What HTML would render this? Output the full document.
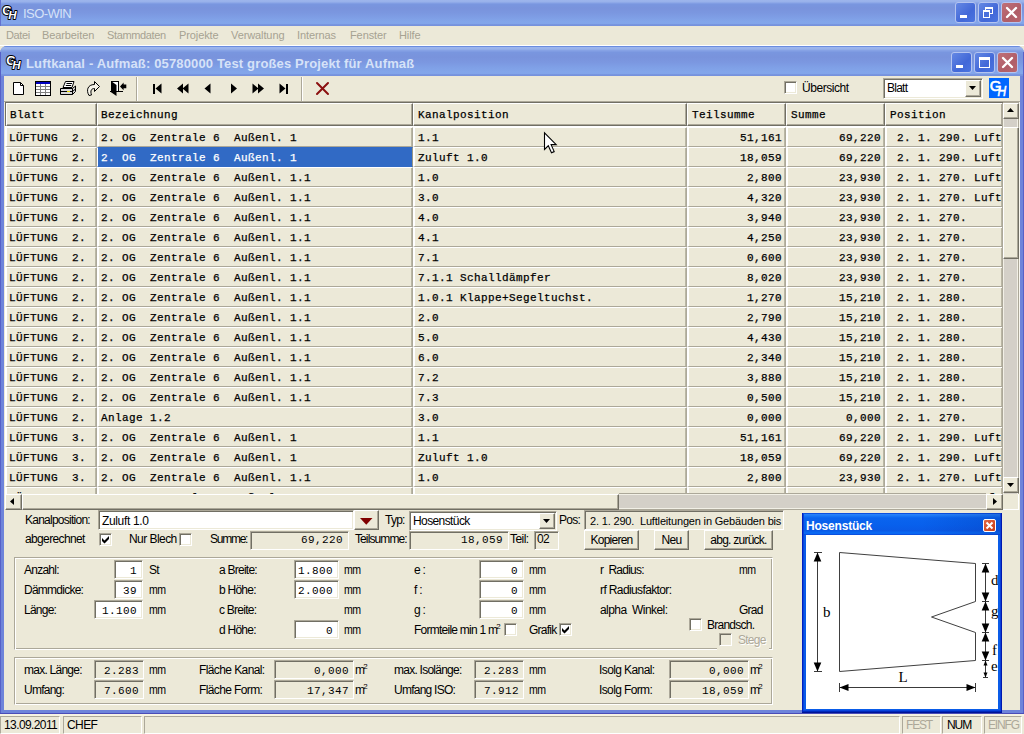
<!DOCTYPE html><html lang="de"><head><meta charset="utf-8"><title>ISO-WIN</title><style>
html,body{margin:0;padding:0;}
body{width:1024px;height:734px;overflow:hidden;background:#ECE9D8;position:relative;font-family:"Liberation Sans",sans-serif;}
div,span,svg{position:absolute;box-sizing:border-box;}
span{white-space:pre;}
.ms{font-family:"Liberation Sans",sans-serif;font-size:12px;line-height:14px;letter-spacing:-0.75px;color:#000;}
.ar{font-family:"Liberation Sans",sans-serif;font-size:11px;line-height:14px;letter-spacing:0px;color:#000;}
.mono{font-family:"Liberation Mono",monospace;font-size:11px;line-height:14px;letter-spacing:0.4px;color:#000;-webkit-text-stroke:0.25px currentColor;}
.menu{font-family:"Liberation Sans",sans-serif;font-size:11px;line-height:14px;color:#A6A292;letter-spacing:-0.1px;}
.ttl{font-family:"Liberation Sans",sans-serif;font-weight:bold;font-size:13px;line-height:16px;color:#D6E2F8;}

.mono2{font-family:"Liberation Mono",monospace;font-size:11px;line-height:14px;letter-spacing:0.4px;color:#000;}
.sunk{border:1px solid;border-color:#ACA899 #FFFFFF #FFFFFF #ACA899;}
.sunk2{border:1px solid;border-color:#ACA899 #FFFFFF #FFFFFF #ACA899;box-shadow:inset 1px 1px 0 #716F64, inset -1px -1px 0 #ECE9D8;}
.rais{background:#ECE9D8;border:1px solid;border-color:#FFFFFF #716F64 #716F64 #FFFFFF;box-shadow:inset -1px -1px 0 #ACA899;}
.sbtn{background:#ECE9D8;border:1px solid;border-color:#ECE9D8 #716F64 #716F64 #ECE9D8;box-shadow:inset 1px 1px 0 #FFFFFF, inset -1px -1px 0 #ACA899;}
.hd{background:#ECE9D8;border:1px solid;border-color:#FFFFFF #716F64 #716F64 #FFFFFF;box-shadow:inset -1px -1px 0 #ACA899;}
.cell{background:#ECE9D8;border-style:solid;border-color:#FFFFFF #ACA899 #ACA899 #FFFFFF;border-width:1px 1px 1px 2px;overflow:hidden;box-shadow:inset -1px 0 0 #BAB7A4;}
.wb{border:1px solid #C8D4F4;border-radius:3px;}
.groove{border:1px solid;border-color:#ACA899 #FFFFFF #FFFFFF #ACA899;box-shadow:inset 1px 1px 0 #FFFFFF, inset -1px -1px 0 #ACA899;}
.cb{width:13px;height:13px;background:#fff;border:1px solid;border-color:#ACA899 #FFFFFF #FFFFFF #ACA899;box-shadow:inset 1px 1px 0 #716F64, inset -1px -1px 0 #ECE9D8;}
</style></head><body>
<div style="left:0px;top:0px;width:1024px;height:26px;background:linear-gradient(to bottom,#9DB5EC 0px,#98B1EA 2px,#85A1E5 3px,#7996DF 4.5px,#7993DC 8px,#7B97E0 13px,#7F9FE6 18px,#83A6EA 22px,#82A5EA 23.5px,#7A98E1 24px,#7590DB 26px)"></div>
<div style="left:0px;top:0px;width:1px;height:26px;background:#6272D0"></div>
<svg style="left:0px;top:1px" width="20" height="20" viewBox="0 0 20 20"><g font-family="Liberation Sans,sans-serif" font-weight="bold" fill="#fff" stroke="#000" stroke-width="1.800" paint-order="stroke" stroke-linejoin="round"><text x="2.300" y="13.800" font-size="12.500">G</text><text x="8.300" y="18" font-size="11.500" font-style="italic">H</text></g></svg>
<span class="ttl" style="left:23px;top:6px;letter-spacing:-0.55px;font-weight:normal;">ISO-WIN</span>
<div style="left:955px;top:2px;width:21px;height:21px;background:linear-gradient(135deg,#6488E4,#4268D8 60%,#4A74E0);border:1px solid #B4C4F0;border-radius:3px;"></div>
<div style="left:960px;top:15px;width:7px;height:3px;background:#fff"></div>
<div style="left:978px;top:2px;width:21px;height:21px;background:linear-gradient(135deg,#6488E4,#4268D8 60%,#4A74E0);border:1px solid #B4C4F0;border-radius:3px;"></div>
<div style="left:985px;top:7px;width:8px;height:7px;border:1px solid #fff;border-top-width:2px;"></div>
<div style="left:983px;top:10px;width:7px;height:8px;border:1px solid #fff;border-top-width:2px;background:#4A70DC"></div>
<div style="left:1001px;top:2px;width:21px;height:21px;background:linear-gradient(135deg,#C07078,#B05E68 60%,#B8666E);border:1px solid #B4C4F0;border-radius:3px;"></div>
<svg style="left:1001px;top:2px" width="21" height="21"><path d="M6 6 L15 15 M15 6 L6 15" stroke="#fff" stroke-width="2.400" stroke-linecap="round"/></svg>
<div style="left:0px;top:26px;width:1024px;height:19px;background:#ECE9D8"></div>
<div style="left:0px;top:45px;width:1024px;height:1px;background:#FFFFFF"></div>
<span class="menu" style="left:6px;top:28px;letter-spacing:-0.36px;">Datei</span>
<span class="menu" style="left:42px;top:28px;">Bearbeiten</span>
<span class="menu" style="left:107px;top:28px;letter-spacing:-0.36px;">Stammdaten</span>
<span class="menu" style="left:179px;top:28px;">Projekte</span>
<span class="menu" style="left:231px;top:28px;">Verwaltung</span>
<span class="menu" style="left:297px;top:28px;">Internas</span>
<span class="menu" style="left:350px;top:28px;">Fenster</span>
<span class="menu" style="left:399px;top:28px;">Hilfe</span>
<div style="left:0px;top:46px;width:1024px;height:668px;background:#6E84DA;border-radius:7px 7px 0 0;"></div>
<div style="left:0px;top:46px;width:1024px;height:30px;background:linear-gradient(to bottom,#6A8CE0 0px,#6A8CE0 1px,#9DB6EC 1px,#99B3EB 3px,#86A2E5 4.5px,#7996DF 6.5px,#7993DC 11px,#7B97E0 16px,#7F9FE6 21px,#83A6EA 26px,#82A5EA 27.5px,#7A98E1 28px,#7590DB 30px);border-radius:7px 7px 0 0;"></div>
<div style="left:0px;top:52px;width:1px;height:662px;background:#5661C8"></div>
<div style="left:1023px;top:52px;width:1px;height:662px;background:#5661C8"></div>
<div style="left:0px;top:713px;width:1024px;height:1px;background:#4A4CB8"></div>
<div style="left:4px;top:76px;width:1016px;height:634px;background:#ECE9D8"></div>
<svg style="left:4px;top:51px" width="20" height="20" viewBox="0 0 20 20"><g font-family="Liberation Sans,sans-serif" font-weight="bold" fill="#fff" stroke="#000" stroke-width="1.800" paint-order="stroke" stroke-linejoin="round"><text x="2.300" y="13.800" font-size="12.500">G</text><text x="8.300" y="18" font-size="11.500" font-style="italic">H</text></g></svg>
<span class="ttl" style="left:26px;top:56px;letter-spacing:0.15px;">Luftkanal - Aufmaß: 05780000 Test großes Projekt für Aufmaß</span>
<div style="left:951px;top:52px;width:21px;height:21px;background:linear-gradient(135deg,#6488E4,#4268D8 60%,#4A74E0);border:1px solid #B4C4F0;border-radius:3px;"></div>
<div style="left:956px;top:65px;width:7px;height:3px;background:#fff"></div>
<div style="left:974px;top:52px;width:21px;height:21px;background:linear-gradient(135deg,#6488E4,#4268D8 60%,#4A74E0);border:1px solid #B4C4F0;border-radius:3px;"></div>
<div style="left:979px;top:57px;width:11px;height:11px;border:1px solid #fff;border-top-width:3px;"></div>
<div style="left:997px;top:52px;width:21px;height:21px;background:linear-gradient(135deg,#C07078,#B05E68 60%,#B8666E);border:1px solid #B4C4F0;border-radius:3px;"></div>
<svg style="left:997px;top:52px" width="21" height="21"><path d="M6 6 L15 15 M15 6 L6 15" stroke="#fff" stroke-width="2.400" stroke-linecap="round"/></svg>
<div style="left:136px;top:77px;width:1px;height:24px;background:#ACA899"></div>
<div style="left:137px;top:77px;width:1px;height:24px;background:#fff"></div>
<div style="left:301px;top:77px;width:1px;height:24px;background:#ACA899"></div>
<div style="left:302px;top:77px;width:1px;height:24px;background:#fff"></div>
<svg style="left:4px;top:76px" width="340" height="26" viewBox="4 76 340 26">
<path d="M13.500 82.500 H20.500 L23.500 85.500 V94.500 H13.500 Z" fill="#fff" stroke="#000"/><path d="M20.5 82.5 V85.5 H23.5" fill="none" stroke="#000"/>
<rect x="35.5" y="81.5" width="15" height="14" fill="#fff" stroke="#000"/><rect x="36" y="82" width="14" height="2" fill="#0000C0"/>
<path d="M36 86.500H50 M36 89.500H50 M36 92.500H50 M40.500 84V95 M45.500 84V95" stroke="#808080" fill="none"/>
<path d="M65.500 81.500 H74 L72 87.500 H63 Z" fill="#fff" stroke="#000"/><path d="M66.500 83.500H72 M65.800 85.500H71.200" stroke="#000" stroke-width="1"/>
<path d="M60.500 88.5 H72.5 L75.5 86 V91.5 L72.5 94.5 H60.5 Z" fill="#D8D8D8" stroke="#000"/><path d="M60.5 91.5 H72.5 L75.5 89" fill="none" stroke="#000"/><rect x="67" y="91" width="3" height="1" fill="#E8D800"/><path d="M72.5 88.5V94.5" stroke="#000"/>
<path d="M94.500 81.500 L99.500 86.500 L94.500 91.500 V88.500 C91.500 88.500 90 90.500 91.500 95 L89 95.500 C86 90.500 87.500 84.500 94.500 84.500 Z" fill="#F6F4EA" stroke="#000" stroke-linejoin="miter"/>
<rect x="111.500" y="81.500" width="7" height="10" fill="#fff" stroke="#000"/>
<path d="M111 81 L116.500 85 V96 L110 91.500 H111 Z" fill="#000"/><path d="M110 91.500 H123" stroke="#000" fill="none"/>
<path d="M120 86.400 L123.600 82.600 V84.600 H126.300 V88.200 H123.600 V90.200 Z" fill="#000"/>
<g fill="#000"><rect x="153" y="84" width="2" height="10"/><path d="M155.5 88.5 L161.5 83.5 V93.5 Z"/>
<path d="M177 88.5 L183 83.5 V93.5 Z"/><path d="M182.5 88.5 L188.5 83.5 V93.5 Z"/>
<path d="M204.5 88.5 L210.5 83.5 V93.5 Z"/>
<path d="M237 88.5 L231 83.5 V93.5 Z"/>
<path d="M258.5 88.5 L252.5 83.5 V93.5 Z"/><path d="M264 88.5 L258 83.5 V93.5 Z"/>
<path d="M285.5 88.5 L279.5 83.5 V93.5 Z"/><rect x="286" y="84" width="2" height="10"/></g>
<path d="M317 83 L328 94 M328 83 L317 94" stroke="#8B1010" stroke-width="2" stroke-linecap="round"/>
</svg>
<div class="cb" style="left:784px;top:81px;width:13px;height:13px;"></div>
<span class="ms" style="left:802px;top:81px;letter-spacing:-0.45px;">Übersicht</span>
<div class="sunk2" style="left:883px;top:78px;width:100px;height:21px;background:#fff;"></div>
<span class="ms" style="left:887px;top:81px;">Blatt</span>
<div class="rais" style="left:965px;top:80px;width:16px;height:17px;"></div>
<svg style="left:969px;top:86px" width="8" height="5"><path d="M0 0H7L3.5 4Z" fill="#000"/></svg>
<div style="left:989px;top:78px;width:20px;height:20px;background:#0066FF;"></div>
<svg style="left:989px;top:78px" width="21" height="21" viewBox="0 0 21 21"><g font-family="Liberation Sans,sans-serif" fill="#fff"><g stroke="#fff" stroke-width="0.600"><text x="0.800" y="13" font-size="15">G</text><text transform="translate(8.600,18) scale(0.800,1)" font-size="15" font-style="italic">H</text></g></g></svg>
<div style="left:4px;top:101px;width:1016px;height:1px;background:#ACA899"></div>
<div style="left:5px;top:102px;width:998px;height:392px;background:#fff;border-top:1px solid #716F64;"></div>
<div style="left:5px;top:102px;width:1px;height:24px;background:#716F64"></div>
<div style="left:5px;top:102px;width:998px;height:392px;overflow:hidden;">
<div class="hd" style="left:1px;top:1px;width:91px;height:23px;"><span class="mono" style="left:3px;top:4px;">Blatt</span></div>
<div class="hd" style="left:92px;top:1px;width:316px;height:23px;"><span class="mono" style="left:3px;top:4px;">Bezeichnung</span></div>
<div class="hd" style="left:408px;top:1px;width:274px;height:23px;"><span class="mono" style="left:4px;top:4px;">Kanalposition</span></div>
<div class="hd" style="left:682px;top:1px;width:99px;height:23px;"><span class="mono" style="left:4px;top:4px;">Teilsumme</span></div>
<div class="hd" style="left:781px;top:1px;width:99px;height:23px;"><span class="mono" style="left:4px;top:4px;">Summe</span></div>
<div class="hd" style="left:880px;top:1px;width:118px;height:23px;"><span class="mono" style="left:4px;top:4px;">Position</span></div>
<div class="cell" style="left:0px;top:25px;width:92px;height:20px;"><span class="mono" style="left:2px;top:3px;">LÜFTUNG  2.</span></div>
<div class="cell" style="left:92px;top:25px;width:316px;height:20px;"><span class="mono" style="left:2px;top:3px;">2. OG  Zentrale 6  Außenl. 1</span></div>
<div class="cell" style="left:408px;top:25px;width:274px;height:20px;"><span class="mono" style="left:3px;top:3px;">1.1</span></div>
<div class="cell" style="left:682px;top:25px;width:99px;height:20px;"><span class="mono" style="right:3px;top:3px;">51,161</span></div>
<div class="cell" style="left:781px;top:25px;width:99px;height:20px;"><span class="mono" style="right:3px;top:3px;">69,220</span></div>
<div class="cell" style="left:880px;top:25px;width:118px;height:20px;"><span class="mono" style="left:3px;top:3px;"> 2. 1. 290. Luft</span></div>
<div class="cell" style="left:0px;top:45px;width:92px;height:20px;"><span class="mono" style="left:2px;top:3px;">LÜFTUNG  2.</span></div>
<div class="cell" style="left:92px;top:45px;width:316px;height:20px;background:#316AC5;border-color:#316AC5 #9A9786 #316AC5 #fff;border-left-width:1px;box-shadow:none;"><span class="mono" style="left:3px;top:3px;color:#fff;">2. OG  Zentrale 6  Außenl. 1</span></div>
<div class="cell" style="left:408px;top:45px;width:274px;height:20px;"><span class="mono" style="left:3px;top:3px;">Zuluft 1.0</span></div>
<div class="cell" style="left:682px;top:45px;width:99px;height:20px;"><span class="mono" style="right:3px;top:3px;">18,059</span></div>
<div class="cell" style="left:781px;top:45px;width:99px;height:20px;"><span class="mono" style="right:3px;top:3px;">69,220</span></div>
<div class="cell" style="left:880px;top:45px;width:118px;height:20px;"><span class="mono" style="left:3px;top:3px;"> 2. 1. 290. Luft</span></div>
<div class="cell" style="left:0px;top:65px;width:92px;height:20px;"><span class="mono" style="left:2px;top:3px;">LÜFTUNG  2.</span></div>
<div class="cell" style="left:92px;top:65px;width:316px;height:20px;"><span class="mono" style="left:2px;top:3px;">2. OG  Zentrale 6  Außenl. 1.1</span></div>
<div class="cell" style="left:408px;top:65px;width:274px;height:20px;"><span class="mono" style="left:3px;top:3px;">1.0</span></div>
<div class="cell" style="left:682px;top:65px;width:99px;height:20px;"><span class="mono" style="right:3px;top:3px;">2,800</span></div>
<div class="cell" style="left:781px;top:65px;width:99px;height:20px;"><span class="mono" style="right:3px;top:3px;">23,930</span></div>
<div class="cell" style="left:880px;top:65px;width:118px;height:20px;"><span class="mono" style="left:3px;top:3px;"> 2. 1. 270. Luft</span></div>
<div class="cell" style="left:0px;top:85px;width:92px;height:20px;"><span class="mono" style="left:2px;top:3px;">LÜFTUNG  2.</span></div>
<div class="cell" style="left:92px;top:85px;width:316px;height:20px;"><span class="mono" style="left:2px;top:3px;">2. OG  Zentrale 6  Außenl. 1.1</span></div>
<div class="cell" style="left:408px;top:85px;width:274px;height:20px;"><span class="mono" style="left:3px;top:3px;">3.0</span></div>
<div class="cell" style="left:682px;top:85px;width:99px;height:20px;"><span class="mono" style="right:3px;top:3px;">4,320</span></div>
<div class="cell" style="left:781px;top:85px;width:99px;height:20px;"><span class="mono" style="right:3px;top:3px;">23,930</span></div>
<div class="cell" style="left:880px;top:85px;width:118px;height:20px;"><span class="mono" style="left:3px;top:3px;"> 2. 1. 270. Luft</span></div>
<div class="cell" style="left:0px;top:105px;width:92px;height:20px;"><span class="mono" style="left:2px;top:3px;">LÜFTUNG  2.</span></div>
<div class="cell" style="left:92px;top:105px;width:316px;height:20px;"><span class="mono" style="left:2px;top:3px;">2. OG  Zentrale 6  Außenl. 1.1</span></div>
<div class="cell" style="left:408px;top:105px;width:274px;height:20px;"><span class="mono" style="left:3px;top:3px;">4.0</span></div>
<div class="cell" style="left:682px;top:105px;width:99px;height:20px;"><span class="mono" style="right:3px;top:3px;">3,940</span></div>
<div class="cell" style="left:781px;top:105px;width:99px;height:20px;"><span class="mono" style="right:3px;top:3px;">23,930</span></div>
<div class="cell" style="left:880px;top:105px;width:118px;height:20px;"><span class="mono" style="left:3px;top:3px;"> 2. 1. 270.</span></div>
<div class="cell" style="left:0px;top:125px;width:92px;height:20px;"><span class="mono" style="left:2px;top:3px;">LÜFTUNG  2.</span></div>
<div class="cell" style="left:92px;top:125px;width:316px;height:20px;"><span class="mono" style="left:2px;top:3px;">2. OG  Zentrale 6  Außenl. 1.1</span></div>
<div class="cell" style="left:408px;top:125px;width:274px;height:20px;"><span class="mono" style="left:3px;top:3px;">4.1</span></div>
<div class="cell" style="left:682px;top:125px;width:99px;height:20px;"><span class="mono" style="right:3px;top:3px;">4,250</span></div>
<div class="cell" style="left:781px;top:125px;width:99px;height:20px;"><span class="mono" style="right:3px;top:3px;">23,930</span></div>
<div class="cell" style="left:880px;top:125px;width:118px;height:20px;"><span class="mono" style="left:3px;top:3px;"> 2. 1. 270.</span></div>
<div class="cell" style="left:0px;top:145px;width:92px;height:20px;"><span class="mono" style="left:2px;top:3px;">LÜFTUNG  2.</span></div>
<div class="cell" style="left:92px;top:145px;width:316px;height:20px;"><span class="mono" style="left:2px;top:3px;">2. OG  Zentrale 6  Außenl. 1.1</span></div>
<div class="cell" style="left:408px;top:145px;width:274px;height:20px;"><span class="mono" style="left:3px;top:3px;">7.1</span></div>
<div class="cell" style="left:682px;top:145px;width:99px;height:20px;"><span class="mono" style="right:3px;top:3px;">0,600</span></div>
<div class="cell" style="left:781px;top:145px;width:99px;height:20px;"><span class="mono" style="right:3px;top:3px;">23,930</span></div>
<div class="cell" style="left:880px;top:145px;width:118px;height:20px;"><span class="mono" style="left:3px;top:3px;"> 2. 1. 270.</span></div>
<div class="cell" style="left:0px;top:165px;width:92px;height:20px;"><span class="mono" style="left:2px;top:3px;">LÜFTUNG  2.</span></div>
<div class="cell" style="left:92px;top:165px;width:316px;height:20px;"><span class="mono" style="left:2px;top:3px;">2. OG  Zentrale 6  Außenl. 1.1</span></div>
<div class="cell" style="left:408px;top:165px;width:274px;height:20px;"><span class="mono" style="left:3px;top:3px;">7.1.1 Schalldämpfer</span></div>
<div class="cell" style="left:682px;top:165px;width:99px;height:20px;"><span class="mono" style="right:3px;top:3px;">8,020</span></div>
<div class="cell" style="left:781px;top:165px;width:99px;height:20px;"><span class="mono" style="right:3px;top:3px;">23,930</span></div>
<div class="cell" style="left:880px;top:165px;width:118px;height:20px;"><span class="mono" style="left:3px;top:3px;"> 2. 1. 270.</span></div>
<div class="cell" style="left:0px;top:185px;width:92px;height:20px;"><span class="mono" style="left:2px;top:3px;">LÜFTUNG  2.</span></div>
<div class="cell" style="left:92px;top:185px;width:316px;height:20px;"><span class="mono" style="left:2px;top:3px;">2. OG  Zentrale 6  Außenl. 1.1</span></div>
<div class="cell" style="left:408px;top:185px;width:274px;height:20px;"><span class="mono" style="left:3px;top:3px;">1.0.1 Klappe+Segeltuchst.</span></div>
<div class="cell" style="left:682px;top:185px;width:99px;height:20px;"><span class="mono" style="right:3px;top:3px;">1,270</span></div>
<div class="cell" style="left:781px;top:185px;width:99px;height:20px;"><span class="mono" style="right:3px;top:3px;">15,210</span></div>
<div class="cell" style="left:880px;top:185px;width:118px;height:20px;"><span class="mono" style="left:3px;top:3px;"> 2. 1. 280.</span></div>
<div class="cell" style="left:0px;top:205px;width:92px;height:20px;"><span class="mono" style="left:2px;top:3px;">LÜFTUNG  2.</span></div>
<div class="cell" style="left:92px;top:205px;width:316px;height:20px;"><span class="mono" style="left:2px;top:3px;">2. OG  Zentrale 6  Außenl. 1.1</span></div>
<div class="cell" style="left:408px;top:205px;width:274px;height:20px;"><span class="mono" style="left:3px;top:3px;">2.0</span></div>
<div class="cell" style="left:682px;top:205px;width:99px;height:20px;"><span class="mono" style="right:3px;top:3px;">2,790</span></div>
<div class="cell" style="left:781px;top:205px;width:99px;height:20px;"><span class="mono" style="right:3px;top:3px;">15,210</span></div>
<div class="cell" style="left:880px;top:205px;width:118px;height:20px;"><span class="mono" style="left:3px;top:3px;"> 2. 1. 280.</span></div>
<div class="cell" style="left:0px;top:225px;width:92px;height:20px;"><span class="mono" style="left:2px;top:3px;">LÜFTUNG  2.</span></div>
<div class="cell" style="left:92px;top:225px;width:316px;height:20px;"><span class="mono" style="left:2px;top:3px;">2. OG  Zentrale 6  Außenl. 1.1</span></div>
<div class="cell" style="left:408px;top:225px;width:274px;height:20px;"><span class="mono" style="left:3px;top:3px;">5.0</span></div>
<div class="cell" style="left:682px;top:225px;width:99px;height:20px;"><span class="mono" style="right:3px;top:3px;">4,430</span></div>
<div class="cell" style="left:781px;top:225px;width:99px;height:20px;"><span class="mono" style="right:3px;top:3px;">15,210</span></div>
<div class="cell" style="left:880px;top:225px;width:118px;height:20px;"><span class="mono" style="left:3px;top:3px;"> 2. 1. 280.</span></div>
<div class="cell" style="left:0px;top:245px;width:92px;height:20px;"><span class="mono" style="left:2px;top:3px;">LÜFTUNG  2.</span></div>
<div class="cell" style="left:92px;top:245px;width:316px;height:20px;"><span class="mono" style="left:2px;top:3px;">2. OG  Zentrale 6  Außenl. 1.1</span></div>
<div class="cell" style="left:408px;top:245px;width:274px;height:20px;"><span class="mono" style="left:3px;top:3px;">6.0</span></div>
<div class="cell" style="left:682px;top:245px;width:99px;height:20px;"><span class="mono" style="right:3px;top:3px;">2,340</span></div>
<div class="cell" style="left:781px;top:245px;width:99px;height:20px;"><span class="mono" style="right:3px;top:3px;">15,210</span></div>
<div class="cell" style="left:880px;top:245px;width:118px;height:20px;"><span class="mono" style="left:3px;top:3px;"> 2. 1. 280.</span></div>
<div class="cell" style="left:0px;top:265px;width:92px;height:20px;"><span class="mono" style="left:2px;top:3px;">LÜFTUNG  2.</span></div>
<div class="cell" style="left:92px;top:265px;width:316px;height:20px;"><span class="mono" style="left:2px;top:3px;">2. OG  Zentrale 6  Außenl. 1.1</span></div>
<div class="cell" style="left:408px;top:265px;width:274px;height:20px;"><span class="mono" style="left:3px;top:3px;">7.2</span></div>
<div class="cell" style="left:682px;top:265px;width:99px;height:20px;"><span class="mono" style="right:3px;top:3px;">3,880</span></div>
<div class="cell" style="left:781px;top:265px;width:99px;height:20px;"><span class="mono" style="right:3px;top:3px;">15,210</span></div>
<div class="cell" style="left:880px;top:265px;width:118px;height:20px;"><span class="mono" style="left:3px;top:3px;"> 2. 1. 280.</span></div>
<div class="cell" style="left:0px;top:285px;width:92px;height:20px;"><span class="mono" style="left:2px;top:3px;">LÜFTUNG  2.</span></div>
<div class="cell" style="left:92px;top:285px;width:316px;height:20px;"><span class="mono" style="left:2px;top:3px;">2. OG  Zentrale 6  Außenl. 1.1</span></div>
<div class="cell" style="left:408px;top:285px;width:274px;height:20px;"><span class="mono" style="left:3px;top:3px;">7.3</span></div>
<div class="cell" style="left:682px;top:285px;width:99px;height:20px;"><span class="mono" style="right:3px;top:3px;">0,500</span></div>
<div class="cell" style="left:781px;top:285px;width:99px;height:20px;"><span class="mono" style="right:3px;top:3px;">15,210</span></div>
<div class="cell" style="left:880px;top:285px;width:118px;height:20px;"><span class="mono" style="left:3px;top:3px;"> 2. 1. 280.</span></div>
<div class="cell" style="left:0px;top:305px;width:92px;height:20px;"><span class="mono" style="left:2px;top:3px;">LÜFTUNG  2.</span></div>
<div class="cell" style="left:92px;top:305px;width:316px;height:20px;"><span class="mono" style="left:2px;top:3px;">Anlage 1.2</span></div>
<div class="cell" style="left:408px;top:305px;width:274px;height:20px;"><span class="mono" style="left:3px;top:3px;">3.0</span></div>
<div class="cell" style="left:682px;top:305px;width:99px;height:20px;"><span class="mono" style="right:3px;top:3px;">0,000</span></div>
<div class="cell" style="left:781px;top:305px;width:99px;height:20px;"><span class="mono" style="right:3px;top:3px;">0,000</span></div>
<div class="cell" style="left:880px;top:305px;width:118px;height:20px;"><span class="mono" style="left:3px;top:3px;"> 2. 1. 270.</span></div>
<div class="cell" style="left:0px;top:325px;width:92px;height:20px;"><span class="mono" style="left:2px;top:3px;">LÜFTUNG  3.</span></div>
<div class="cell" style="left:92px;top:325px;width:316px;height:20px;"><span class="mono" style="left:2px;top:3px;">2. OG  Zentrale 6  Außenl. 1</span></div>
<div class="cell" style="left:408px;top:325px;width:274px;height:20px;"><span class="mono" style="left:3px;top:3px;">1.1</span></div>
<div class="cell" style="left:682px;top:325px;width:99px;height:20px;"><span class="mono" style="right:3px;top:3px;">51,161</span></div>
<div class="cell" style="left:781px;top:325px;width:99px;height:20px;"><span class="mono" style="right:3px;top:3px;">69,220</span></div>
<div class="cell" style="left:880px;top:325px;width:118px;height:20px;"><span class="mono" style="left:3px;top:3px;"> 2. 1. 290. Luft</span></div>
<div class="cell" style="left:0px;top:345px;width:92px;height:20px;"><span class="mono" style="left:2px;top:3px;">LÜFTUNG  3.</span></div>
<div class="cell" style="left:92px;top:345px;width:316px;height:20px;"><span class="mono" style="left:2px;top:3px;">2. OG  Zentrale 6  Außenl. 1</span></div>
<div class="cell" style="left:408px;top:345px;width:274px;height:20px;"><span class="mono" style="left:3px;top:3px;">Zuluft 1.0</span></div>
<div class="cell" style="left:682px;top:345px;width:99px;height:20px;"><span class="mono" style="right:3px;top:3px;">18,059</span></div>
<div class="cell" style="left:781px;top:345px;width:99px;height:20px;"><span class="mono" style="right:3px;top:3px;">69,220</span></div>
<div class="cell" style="left:880px;top:345px;width:118px;height:20px;"><span class="mono" style="left:3px;top:3px;"> 2. 1. 290. Luft</span></div>
<div class="cell" style="left:0px;top:365px;width:92px;height:20px;"><span class="mono" style="left:2px;top:3px;">LÜFTUNG  3.</span></div>
<div class="cell" style="left:92px;top:365px;width:316px;height:20px;"><span class="mono" style="left:2px;top:3px;">2. OG  Zentrale 6  Außenl. 1.1</span></div>
<div class="cell" style="left:408px;top:365px;width:274px;height:20px;"><span class="mono" style="left:3px;top:3px;">1.0</span></div>
<div class="cell" style="left:682px;top:365px;width:99px;height:20px;"><span class="mono" style="right:3px;top:3px;">2,800</span></div>
<div class="cell" style="left:781px;top:365px;width:99px;height:20px;"><span class="mono" style="right:3px;top:3px;">23,930</span></div>
<div class="cell" style="left:880px;top:365px;width:118px;height:20px;"><span class="mono" style="left:3px;top:3px;"> 2. 1. 270. Luft</span></div>
<div class="cell" style="left:0px;top:385px;width:92px;height:20px;"><span class="mono" style="left:2px;top:3px;">LÜFTUNG  3.</span></div>
<div class="cell" style="left:92px;top:385px;width:316px;height:20px;"><span class="mono" style="left:2px;top:3px;">2. OG  Zentrale 6  Außenl. 1.1</span></div>
<div class="cell" style="left:408px;top:385px;width:274px;height:20px;"><span class="mono" style="left:3px;top:3px;">3.0</span></div>
<div class="cell" style="left:682px;top:385px;width:99px;height:20px;"><span class="mono" style="right:3px;top:3px;">4,320</span></div>
<div class="cell" style="left:781px;top:385px;width:99px;height:20px;"><span class="mono" style="right:3px;top:3px;">23,930</span></div>
<div class="cell" style="left:880px;top:385px;width:118px;height:20px;"><span class="mono" style="left:3px;top:3px;"> 2. 1. 270. Luft</span></div>
</div>
<div style="left:1003px;top:102px;width:16px;height:1px;background:#ACA899"></div>
<div style="left:1003px;top:103px;width:16px;height:391px;background:linear-gradient(to right,#F2F0E6 0,#F2F0E6 1px,#D4D0C8 1px,#D4D0C8 14px,#F2F0E6 14px,#F2F0E6 15px,#ACA899 15px)"></div>
<div style="left:1002px;top:103px;width:1px;height:390px;background:#ACA899"></div>
<div class="rais" style="left:1003px;top:103px;width:16px;height:16px;"></div>
<svg style="left:1007px;top:108px" width="8" height="5"><path d="M0 4H7L3.5 0Z" fill="#000"/></svg>
<div class="rais" style="left:1003px;top:127px;width:16px;height:132px;"></div>
<div class="rais" style="left:1003px;top:477px;width:16px;height:16px;"></div>
<svg style="left:1007px;top:483px" width="8" height="5"><path d="M0 0H7L3.5 4Z" fill="#000"/></svg>
<div style="left:5px;top:494px;width:998px;height:16px;background:#ECE9D8"></div>
<div style="left:619px;top:493px;width:367px;height:17px;background:linear-gradient(to bottom,#ACA899 0,#ACA899 1px,#F2F0E6 1px,#F2F0E6 2px,#D4D0C8 2px,#D4D0C8 15px,#F2F0E6 15px,#F2F0E6 16px,#ACA899 16px)"></div>
<div class="rais" style="left:5px;top:494px;width:17px;height:16px;"></div>
<svg style="left:10px;top:498px" width="5" height="8"><path d="M4 0V7L0 3.5Z" fill="#000"/></svg>
<div class="rais" style="left:22px;top:494px;width:597px;height:16px;"></div>
<div class="rais" style="left:986px;top:494px;width:17px;height:16px;"></div>
<svg style="left:993px;top:498px" width="5" height="8"><path d="M0 0V7L4 3.5Z" fill="#000"/></svg>
<div style="left:1003px;top:494px;width:16px;height:16px;background:#ECE9D8"></div>
<div style="left:1003px;top:509px;width:16px;height:1px;background:#fff"></div>
<div style="left:1018px;top:494px;width:1px;height:16px;background:#fff"></div>
<div style="left:1019px;top:102px;width:1px;height:392px;background:#F8F6EE"></div>
<svg style="left:543px;top:131px" width="15" height="24" viewBox="0 0 15 24"><path d="M1.500 1.800 V18.500 L5.300 14.800 L8.500 21.800 L11.200 20.600 L8.100 13.600 H13.200 Z" fill="#fff" stroke="#000" stroke-width="1.100"/></svg>
<span class="ms" style="left:25px;top:513px;">Kanalposition:</span>
<div class="sunk2" style="left:98px;top:510px;width:256px;height:20px;background:#fff;"></div>
<span class="ms" style="left:102px;top:514px;letter-spacing:-0.35px;">Zuluft 1.0</span>
<div class="rais" style="left:354px;top:510px;width:25px;height:20px;"></div>
<svg style="left:360px;top:518px" width="13" height="8"><path d="M0 0H12.500L6.250 6.800Z" fill="#800000"/></svg>
<span class="ms" style="left:385px;top:513px;">Typ:</span>
<div class="sunk2" style="left:409px;top:511px;width:148px;height:20px;background:#fff;"></div>
<span class="ms" style="left:413px;top:514px;letter-spacing:-0.6px;">Hosenstück</span>
<div class="rais" style="left:539px;top:513px;width:16px;height:16px;"></div>
<svg style="left:543px;top:519px" width="8" height="5"><path d="M0 0H7L3.5 4Z" fill="#000"/></svg>
<span class="ms" style="left:559px;top:513px;">Pos:</span>
<div class="sunk2" style="left:584px;top:510px;width:200px;height:20px;overflow:hidden;"></div>
<span class="ar" style="left:590px;top:514px;letter-spacing:-0.17px;">2. 1. 290.  Luftleitungen in Gebäuden bis</span>
<span class="ms" style="left:25px;top:532px;letter-spacing:-0.64px;">abgerechnet</span>
<div class="cb" style="left:99px;top:533px;width:13px;height:13px;"></div>
<svg style="left:102px;top:536px" width="8" height="8"><path d="M0 2 L2.500 4.500 L7 0 V3 L2.500 7.500 L0 5 Z" fill="#000"/></svg>
<span class="ms" style="left:129px;top:532px;letter-spacing:-0.55px;">Nur Blech</span>
<div class="cb" style="left:179px;top:533px;width:13px;height:13px;"></div>
<span class="ms" style="left:210px;top:532px;letter-spacing:-1.25px;">Summe:</span>
<div class="sunk2" style="left:250px;top:531px;width:99px;height:19px;"></div>
<span class="mono2" style="left:0px;top:533px;left:auto;right:681px;">69,220</span>
<span class="ms" style="left:355px;top:532px;letter-spacing:-0.9px;">Teilsumme:</span>
<div class="sunk2" style="left:409px;top:531px;width:100px;height:19px;"></div>
<span class="mono2" style="left:0px;top:533px;left:auto;right:521px;">18,059</span>
<span class="ms" style="left:510px;top:532px;letter-spacing:-0.55px;">Teil:</span>
<div class="sunk2" style="left:534px;top:531px;width:25px;height:19px;"></div>
<span class="ms" style="left:537px;top:532px;">02</span>
<div class="rais" style="left:584px;top:530px;width:55px;height:20px;"></div>
<span class="ms" style="left:584px;top:533px;width:55px;text-align:center;">Kopieren</span>
<div class="rais" style="left:654px;top:530px;width:35px;height:20px;"></div>
<span class="ms" style="left:654px;top:533px;width:35px;text-align:center;">Neu</span>
<div class="rais" style="left:704px;top:530px;width:69px;height:20px;"></div>
<span class="ms" style="left:704px;top:533px;width:69px;text-align:center;">abg. zurück.</span>
<div class="groove" style="left:14px;top:557px;width:759px;height:93px;"></div>
<span class="ms" style="left:24px;top:563px;">Anzahl:</span>
<div class="sunk2" style="left:114px;top:560px;width:29px;height:19px;background:#fff;"></div>
<span class="mono2" style="left:0px;top:564px;left:auto;right:887px;">1</span>
<span class="ms" style="left:149px;top:563px;">St</span>
<span class="ms" style="left:24px;top:583px;">Dämmdicke:</span>
<div class="sunk2" style="left:114px;top:580px;width:29px;height:19px;background:#fff;"></div>
<span class="mono2" style="left:0px;top:584px;left:auto;right:887px;">39</span>
<span class="ms" style="left:149px;top:583px;transform:scaleX(0.88);transform-origin:0 0;">mm</span>
<span class="ms" style="left:24px;top:603px;">Länge:</span>
<div class="sunk2" style="left:94px;top:600px;width:49px;height:19px;background:#fff;"></div>
<span class="mono2" style="left:0px;top:604px;left:auto;right:887px;">1.100</span>
<span class="ms" style="left:149px;top:603px;transform:scaleX(0.88);transform-origin:0 0;">mm</span>
<span class="ms" style="left:219px;top:563px;">a Breite:</span>
<div class="sunk2" style="left:294px;top:560px;width:45px;height:19px;background:#fff;"></div>
<span class="mono2" style="left:0px;top:564px;left:auto;right:691px;">1.800</span>
<span class="ms" style="left:344px;top:563px;transform:scaleX(0.88);transform-origin:0 0;">mm</span>
<span class="ms" style="left:219px;top:583px;">b Höhe:</span>
<div class="sunk2" style="left:294px;top:580px;width:45px;height:19px;background:#fff;"></div>
<span class="mono2" style="left:0px;top:584px;left:auto;right:691px;">2.000</span>
<span class="ms" style="left:344px;top:583px;transform:scaleX(0.88);transform-origin:0 0;">mm</span>
<span class="ms" style="left:219px;top:603px;">c Breite:</span>
<span class="ms" style="left:344px;top:603px;transform:scaleX(0.88);transform-origin:0 0;">mm</span>
<span class="ms" style="left:219px;top:623px;">d Höhe:</span>
<div class="sunk2" style="left:294px;top:620px;width:45px;height:19px;background:#fff;"></div>
<span class="mono2" style="left:0px;top:624px;left:auto;right:691px;">0</span>
<span class="ms" style="left:344px;top:623px;transform:scaleX(0.88);transform-origin:0 0;">mm</span>
<span class="ms" style="left:414px;top:563px;">e :</span>
<div class="sunk2" style="left:479px;top:560px;width:45px;height:19px;background:#fff;"></div>
<span class="mono2" style="left:0px;top:564px;left:auto;right:506px;">0</span>
<span class="ms" style="left:529px;top:563px;transform:scaleX(0.88);transform-origin:0 0;">mm</span>
<span class="ms" style="left:414px;top:583px;">f :</span>
<div class="sunk2" style="left:479px;top:580px;width:45px;height:19px;background:#fff;"></div>
<span class="mono2" style="left:0px;top:584px;left:auto;right:506px;">0</span>
<span class="ms" style="left:529px;top:583px;transform:scaleX(0.88);transform-origin:0 0;">mm</span>
<span class="ms" style="left:414px;top:603px;">g :</span>
<div class="sunk2" style="left:479px;top:600px;width:45px;height:19px;background:#fff;"></div>
<span class="mono2" style="left:0px;top:604px;left:auto;right:506px;">0</span>
<span class="ms" style="left:529px;top:603px;transform:scaleX(0.88);transform-origin:0 0;">mm</span>
<span class="ms" style="left:414px;top:623px;">Formteile min 1 m<span style="position:relative;top:-5px;font-size:8px;margin-left:-1px;letter-spacing:0">2</span></span>
<div class="cb" style="left:504px;top:623px;width:13px;height:13px;"></div>
<span class="ms" style="left:529px;top:623px;">Grafik</span>
<div class="cb" style="left:559px;top:623px;width:13px;height:13px;"></div>
<svg style="left:562px;top:626px" width="8" height="8"><path d="M0 2 L2.500 4.500 L7 0 V3 L2.500 7.500 L0 5 Z" fill="#000"/></svg>
<span class="ms" style="left:600px;top:563px;">r  Radius:</span>
<span class="ms" style="left:739px;top:563px;transform:scaleX(0.88);transform-origin:0 0;">mm</span>
<span class="ms" style="left:600px;top:583px;letter-spacing:-0.62px;">rf Radiusfaktor:</span>
<span class="ms" style="left:600px;top:603px;letter-spacing:-0.57px;">alpha  Winkel:</span>
<span class="ms" style="left:739px;top:603px;">Grad</span>
<div class="cb" style="left:689px;top:618px;width:13px;height:13px;"></div>
<span class="ms" style="left:707px;top:618px;">Brandsch.</span>
<div style="left:717px;top:632px;width:52px;height:18px;background:#ECE9D8"></div>
<div class="cb" style="left:719px;top:633px;width:13px;height:13px;background:#ECE9D8"></div>
<span class="ms" style="left:739px;top:634px;color:#fff;">Stege</span>
<span class="ms" style="left:738px;top:633px;color:#ACA899;">Stege</span>
<div class="groove" style="left:14px;top:657px;width:759px;height:48px;"></div>
<span class="ms" style="left:24px;top:663px;">max. Länge:</span>
<div class="sunk2" style="left:94px;top:660px;width:50px;height:19px;background:#ECE9D8;"></div>
<span class="mono2" style="left:0px;top:664px;left:auto;right:885px;">2.283</span>
<span class="ms" style="left:149px;top:663px;transform:scaleX(0.88);transform-origin:0 0;">mm</span>
<span class="ms" style="left:24px;top:683px;">Umfang:</span>
<div class="sunk2" style="left:94px;top:680px;width:50px;height:19px;background:#ECE9D8;"></div>
<span class="mono2" style="left:0px;top:684px;left:auto;right:885px;">7.600</span>
<span class="ms" style="left:149px;top:683px;transform:scaleX(0.88);transform-origin:0 0;">mm</span>
<span class="ms" style="left:199px;top:663px;letter-spacing:-0.6px;">Fläche Kanal:</span>
<div class="sunk2" style="left:274px;top:660px;width:80px;height:19px;background:#ECE9D8;"></div>
<span class="mono2" style="left:0px;top:664px;left:auto;right:675px;">0,000</span>
<span class="ms" style="left:355px;top:663px;">m<span style="position:relative;top:-5px;font-size:8px;margin-left:-1px;letter-spacing:0">2</span></span>
<span class="ms" style="left:199px;top:683px;letter-spacing:-0.62px;">Fläche Form:</span>
<div class="sunk2" style="left:274px;top:680px;width:80px;height:19px;background:#ECE9D8;"></div>
<span class="mono2" style="left:0px;top:684px;left:auto;right:675px;">17,347</span>
<span class="ms" style="left:355px;top:683px;">m<span style="position:relative;top:-5px;font-size:8px;margin-left:-1px;letter-spacing:0">2</span></span>
<span class="ms" style="left:394px;top:663px;">max. Isolänge:</span>
<div class="sunk2" style="left:474px;top:660px;width:50px;height:19px;background:#ECE9D8;"></div>
<span class="mono2" style="left:0px;top:664px;left:auto;right:505px;">2.283</span>
<span class="ms" style="left:529px;top:663px;transform:scaleX(0.88);transform-origin:0 0;">mm</span>
<span class="ms" style="left:394px;top:683px;">Umfang ISO:</span>
<div class="sunk2" style="left:474px;top:680px;width:50px;height:19px;background:#ECE9D8;"></div>
<span class="mono2" style="left:0px;top:684px;left:auto;right:505px;">7.912</span>
<span class="ms" style="left:529px;top:683px;transform:scaleX(0.88);transform-origin:0 0;">mm</span>
<span class="ms" style="left:599px;top:663px;letter-spacing:-0.6px;">Isolg Kanal:</span>
<div class="sunk2" style="left:669px;top:660px;width:80px;height:19px;background:#ECE9D8;"></div>
<span class="mono2" style="left:0px;top:664px;left:auto;right:280px;">0,000</span>
<span class="ms" style="left:750px;top:663px;">m<span style="position:relative;top:-5px;font-size:8px;margin-left:-1px;letter-spacing:0">2</span></span>
<span class="ms" style="left:599px;top:683px;letter-spacing:-0.62px;">Isolg Form:</span>
<div class="sunk2" style="left:669px;top:680px;width:80px;height:19px;background:#ECE9D8;"></div>
<span class="mono2" style="left:0px;top:684px;left:auto;right:280px;">18,059</span>
<span class="ms" style="left:750px;top:683px;">m<span style="position:relative;top:-5px;font-size:8px;margin-left:-1px;letter-spacing:0">2</span></span>
<div style="left:802px;top:513px;width:200px;height:200px;background:#0A5CE8;"></div>
<div style="left:802px;top:513px;width:200px;height:22px;background:linear-gradient(to right,rgba(0,0,0,0) 60%,rgba(0,20,120,0.18) 100%),linear-gradient(to bottom,#0A50E0 0px,#0A50E0 1px,#2C84FA 1px,#1876F6 3px,#0A64EE 5px,#0860EC 12px,#0A5AE6 18px,#0A68F2 19px,#0A68F2 20.500px,#0A50E0 21px)"></div>
<div style="left:802px;top:513px;width:1px;height:200px;background:#0020C0"></div>
<div style="left:803px;top:514px;width:1px;height:198px;background:#0A44DC"></div>
<div style="left:1001px;top:513px;width:1px;height:200px;background:#0018B0"></div>
<div style="left:1000px;top:514px;width:1px;height:198px;background:#0A40D8"></div>
<div style="left:802px;top:712px;width:200px;height:1px;background:#001496"></div>
<div style="left:803px;top:711px;width:198px;height:1px;background:#0028BC"></div>
<div style="left:804px;top:710px;width:196px;height:1px;background:#0A44DC"></div>
<div style="left:806px;top:535px;width:192px;height:174px;background:#fff"></div>
<span class="ms" style="left:806px;top:518px;font-weight:bold;font-size:12px;color:#fff;letter-spacing:-0.2px;line-height:16px;">Hosenstück</span>
<div style="left:983px;top:519px;width:13px;height:13px;background:linear-gradient(135deg,#E46A44,#C83A14);border:1px solid #fff;border-radius:2px;"></div>
<svg style="left:983px;top:519px" width="13" height="13"><path d="M3.500 3.500 L9.500 9.500 M9.500 3.500 L3.500 9.500" stroke="#fff" stroke-width="2"/></svg>
<svg style="left:806px;top:535px" width="192" height="174" viewBox="806 535 192 174">
<g fill="none" stroke="#404040" stroke-width="1"><path d="M839.500 552.500 L975.500 563.500 V601.500 L931.500 617 L975.500 632.500 V660.500 L839.500 671.500 Z"/></g>
<g stroke="#3A3A3A" stroke-width="1" fill="none"><path d="M817.500 552 V672 M814 552.500 H822 M814 671.500 H822"/>
<path d="M985.500 563 V677 M982 563.500 H989 M982 601.500 H989 M982 632.500 H989 M982 660.500 H989 M983 677.500 H988"/>
<path d="M839 687.500 H976 M839.500 683 V692 M975.500 683 V692"/></g>
<g fill="#000">
<path d="M817.5 552.5 L813.7 561.5 H821.3 Z"/><path d="M817.5 671.5 L813.7 662.5 H821.3 Z"/>
<path d="M985.5 563.5 L981.7 572.5 H989.3 Z"/><path d="M985.5 601.5 L981.7 592.5 H989.3 Z"/>
<path d="M985.5 601.5 L981.7 610.5 H989.3 Z"/><path d="M985.5 632.5 L981.7 623.5 H989.3 Z"/>
<path d="M985.5 632.5 L981.7 641.5 H989.3 Z"/><path d="M985.5 660.5 L981.7 651.5 H989.3 Z"/>
<path d="M985.5 660.5 L983.5 665.5 H987.5 Z"/><path d="M985.5 677.5 L983.5 672.5 H987.5 Z"/>
<path d="M839.500 687.500 L848.500 684 V691 Z"/><path d="M975.500 687.500 L966.500 684 V691 Z"/>
</g>
<g font-family="Liberation Serif,serif" font-size="15" fill="#000"><text x="823" y="616.500">b</text><text x="991" y="584.500">d</text><text x="991" y="615.500">g</text><text x="992" y="654.500">f</text><text x="991" y="671">e</text><text x="898.500" y="682">L</text></g>
</svg>
<div style="left:0px;top:714px;width:1024px;height:20px;background:#ECE9D8"></div>
<div style="left:0px;top:714px;width:1024px;height:2px;background:#F6F3E2"></div>
<div class="sunk" style="left:0px;top:716px;width:60px;height:18px;"></div>
<span class="ms" style="left:4px;top:718px;color:#000;letter-spacing:-0.6px;">13.09.2011</span>
<div class="sunk" style="left:63px;top:716px;width:79px;height:18px;"></div>
<span class="ms" style="left:67px;top:718px;color:#000;letter-spacing:-0.6px;">CHEF</span>
<div class="sunk" style="left:144px;top:716px;width:756px;height:18px;"></div>
<div class="sunk" style="left:902px;top:716px;width:39px;height:18px;"></div>
<span class="ms" style="left:906px;top:718px;color:#ACA899;letter-spacing:-1.2px;">FEST</span>
<div class="sunk" style="left:942px;top:716px;width:40px;height:18px;"></div>
<span class="ms" style="left:947px;top:718px;color:#000;letter-spacing:-1.1px;">NUM</span>
<div class="sunk" style="left:984px;top:716px;width:38px;height:18px;"></div>
<span class="ms" style="left:988px;top:718px;color:#ACA899;letter-spacing:-1.15px;">EINFG</span>
</body></html>
